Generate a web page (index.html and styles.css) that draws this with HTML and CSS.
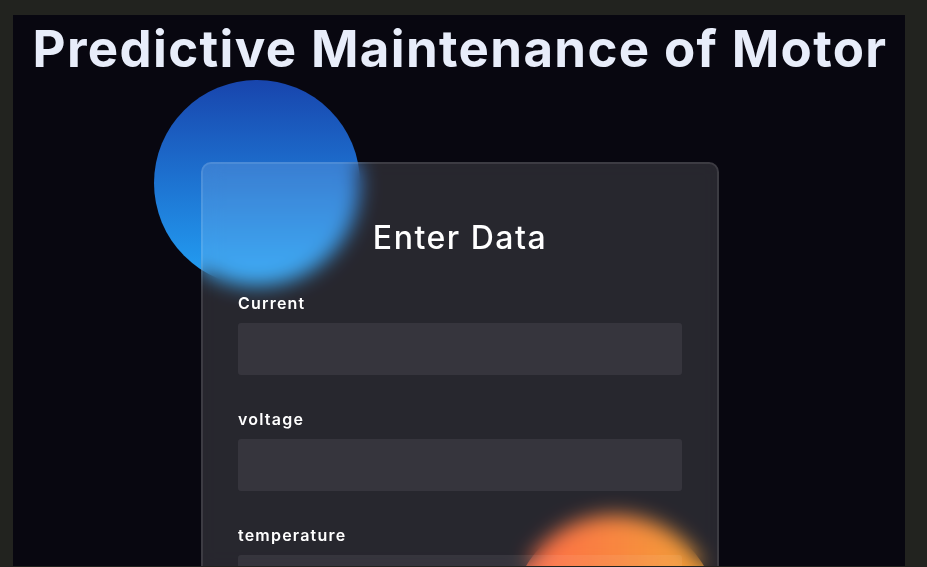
FILE: index.html
```html
<!DOCTYPE html>
<html lang="en">
<head>
<meta charset="utf-8">
<title>Predictive Maintenance of Motor</title>
<link rel="stylesheet" href="styles.css">
</head>
<body>
  <main class="screen">
    <h1 class="title">Predictive Maintenance of Motor</h1>
    <div class="shape shape-blue"></div>
    <div class="shape shape-orange"></div>
    <form class="card">
      <h3 class="card-title">Enter Data</h3>
      <label class="field-label" for="current">Current</label>
      <input class="field-input" id="current" type="text">
      <label class="field-label" for="voltage">voltage</label>
      <input class="field-input" id="voltage" type="text">
      <label class="field-label" for="temperature">temperature</label>
      <input class="field-input" id="temperature" type="text">
    </form>
  </main>
</body>
</html>
```

FILE: styles.css
```css
* { box-sizing: border-box; }

html, body {
  margin: 0;
  padding: 0;
  height: 567px;
  overflow: hidden;
}

body {
  background: #22231f;
  font-family: "Inter", "DejaVu Sans", sans-serif;
}

.screen {
  position: relative;
  margin: 15px 22px 0 13px;
  padding-left: 2px;
  height: 551px;
  background: #080710;
  overflow: hidden;
  display: flex;
  flex-direction: column;
  align-items: center;
}

.title {
  margin: 3px 0 0;
  font-size: 51px;
  line-height: 62px;
  font-weight: 700;
  letter-spacing: 1.35px;
  color: #e8edfa;
  white-space: nowrap;
}

.shape {
  position: absolute;
  width: 206px;
  height: 206px;
  border-radius: 50%;
}

.shape-blue {
  left: 141px;
  top: 65px;
  background: linear-gradient(#1845ad, #23a2f6);
}

.shape-orange {
  left: 499px;
  top: 500px;
  background: linear-gradient(to right, #ff512f, #f09819);
}

.card {
  position: relative;
  width: 518px;
  margin-top: 82px;
  padding: 53px 35px 50px;
  background: rgba(255, 255, 255, 0.13);
  border: 2px solid rgba(255, 255, 255, 0.1);
  border-radius: 10px;
  backdrop-filter: blur(10px);
  -webkit-backdrop-filter: blur(10px);
  flex-shrink: 0;
}

.card-title {
  margin: 0;
  font-size: 32px;
  line-height: 42px;
  font-weight: 500;
  text-align: center;
  color: #ffffff;
  letter-spacing: 1.5px;
}

.field-label {
  display: block;
  margin-top: 32px;
  font-size: 16px;
  line-height: 24px;
  font-weight: 600;
  color: #ffffff;
  letter-spacing: 1.2px;
}

.field-input {
  display: block;
  width: 100%;
  height: 52px;
  margin-top: 8px;
  padding: 0 10px;
  border: none;
  border-radius: 3px;
  background: rgba(255, 255, 255, 0.07);
  color: #ffffff;
  font-family: inherit;
  font-size: 14px;
  outline: none;
}
```
